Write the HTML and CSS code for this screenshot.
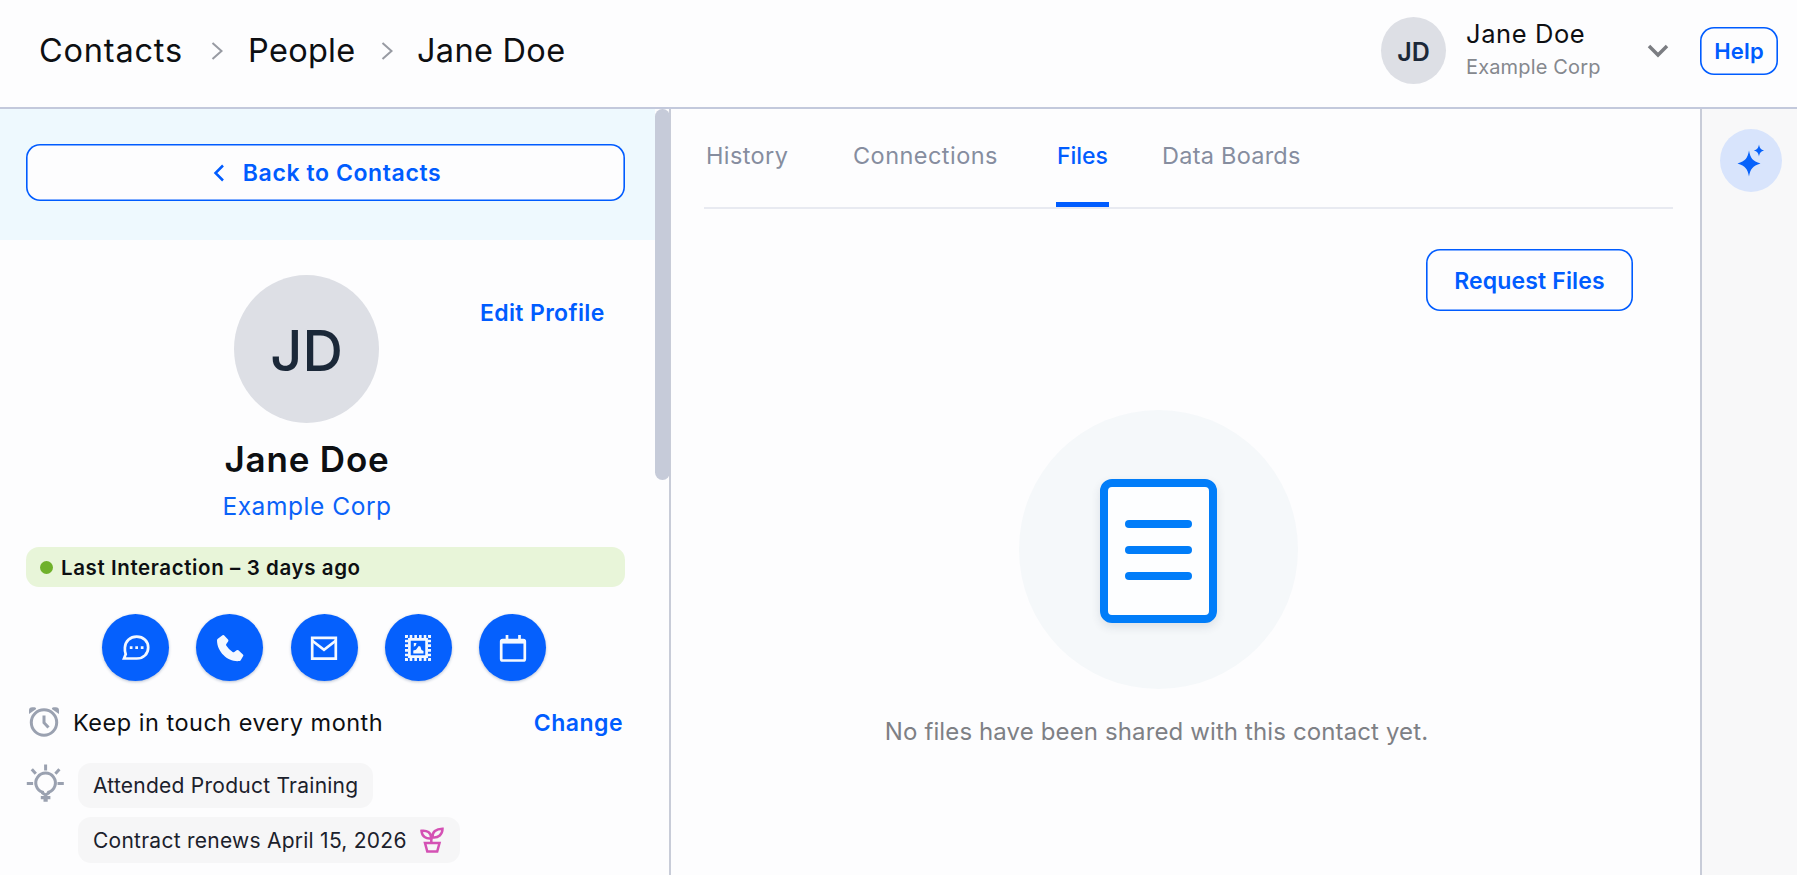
FILE: index.html
```html
<!DOCTYPE html>
<html lang="en">
<head>
<meta charset="utf-8">
<title>Jane Doe</title>
<link rel="stylesheet" href="styles.css">
</head>

<body>
    <header class="header">
        <nav class="crumbs">
            <span class="crumb contacts">Contacts</span>
            <svg class="sep" width="12" height="18" viewBox="0 0 12 18"><path d="M1.5 1l9 8-9 8"/></svg>
            <span class="crumb people">People</span>
            <svg class="sep" width="12" height="18" viewBox="0 0 12 18"><path d="M1.5 1l9 8-9 8"/></svg>
            <span class="crumb person">Jane Doe</span>
        </nav>
        <div class="account">
            <div class="avatar small">JD</div>
            <div class="who">
                <span class="who-name">Jane Doe</span>
                <span class="who-corp">Example Corp</span>
            </div>
            <svg class="down" width="22" height="14" viewBox="0 0 22 14"><path d="M2 2l9 9 9-9"/></svg>
            <button class="btn help">Help</button>
        </div>
    </header>

    <div class="main">
        <aside class="side">
            <div class="side-body">
                <div class="back-bar">
                    <button class="btn back">
                        <svg width="12" height="18" viewBox="0 0 12 18"><path d="M10 1.500L2.500 9l7.500 7.500"/></svg>
                        <span>Back to Contacts</span>
                    </button>
                </div>

                <div class="profile">
                    <div class="avatar big">JD</div>
                    <a class="edit">Edit Profile</a>
                </div>
                <div class="names">
                    <h1 class="name">Jane Doe</h1>
                    <a class="corp">Example Corp</a>
                </div>

                <div class="last"><i class="dot"></i><span>Last Interaction – 3 days ago</span></div>

                <div class="actions">
                    <button class="action">
                        <svg width="28" height="28" viewBox="0 0 28 28">
                            <path class="line" d="M2 24.500l1.700-4.300C2.900 18 2.700 16 2.900 13.600 3.300 7.200 8 2.600 14.700 2.600c6.800 0 11.500 4.600 11.500 10.800 0 6.400-4.700 11.100-11.500 11.100z"/>
                            <path class="fill" d="M7.800 12.200h2.700v2.700H7.800zM13.300 12.200H16v2.700h-2.700zM18.800 12.200h2.700v2.700h-2.700z"/>
                        </svg>
                    </button>
                    <button class="action">
                        <svg width="28" height="28" viewBox="0 0 28 28">
                            <path class="fill" d="M6.500 1.200Q7.300.7 8 1.300l4 4.300q.7.900.1 1.800L10.300 10q-.5.900.1 1.800 2.600 4 6.200 6.300.9.500 1.700-.1l2.300-1.800q.9-.6 1.800.1l4.500 4.100q.8.700.3 1.600l-2.500 4.200q-.6.900-1.600.9C12.500 28.200 1.200 18.500 1 6.500q0-1 .8-1.700z"/>
                        </svg>
                    </button>
                    <button class="action">
                        <svg width="28" height="28" viewBox="0 0 28 28">
                            <path class="line" d="M2.200 3.800h23.600v20.900H2.200z"/>
                            <path class="line" d="M2 6.500l12 9.300 12-9.300"/>
                        </svg>
                    </button>
                    <button class="action">
                        <svg width="28" height="28" viewBox="0 0 28 28">
                            <path class="teeth" d="M1 2.500h26M1 25.500h26M2.500 1v26M25.500 1v26"/>
                            <path class="line" d="M5.400 5.400h17.200v17.200H5.400z"/>
                            <path class="fill" d="M9.300 19.500v-3l2.700-.8 2.700-3.700 1.700.6 1.100 3.300 2 1.200v2.400zM9.800 9h2.700l-.7 2.500-2 1.300z"/>
                        </svg>
                    </button>
                    <button class="action">
                        <svg width="28" height="28" viewBox="0 0 28 28">
                            <rect class="line" x="2.200" y="6" width="23.600" height="20.500" rx="1.500"/>
                            <path class="fill" d="M2 5h24v4.600H2z"/>
                            <path class="line" d="M8 1v6M20.500 1v6"/>
                        </svg>
                    </button>
                </div>

                <div class="touch">
                    <svg class="gray" width="32" height="32" viewBox="0 0 32 32">
                        <circle cx="16" cy="16.500" r="12.700"/>
                        <path d="M16 9.500v7.200l4.500 4.800"/>
                        <path class="solid" d="M1 8V4.500Q1 1.200 4.300 1.200h2.200Q8 1.200 8.200 3zM31 8V4.500q0-3.300-3.300-3.300h-2.200Q24 1.200 23.800 3z"/>
                    </svg>
                    <span class="touch-text">Keep in touch every month</span>
                    <a class="change">Change</a>
                </div>

                <div class="notes">
                    <svg class="gray" width="38" height="41" viewBox="0 0 38 41">
                        <path d="M16.500 30v-.8a9.800 9.800 0 1 1 6.200 0V30l-3.100 2z"/>
                        <path d="M19.600 1.500v6M.8 20.500h6.300M31.500 20.500h6.300M5.800 6.200l4 4.500M33.400 6.200l-4 4.500"/>
                        <path class="solid" d="M14.800 33h9.600v3.300h-2.700v2.500h-4.200v-2.500h-2.700z"/>
                    </svg>
                    <div class="chips">
                        <div class="chip training">Attended Product Training</div>
                        <div class="chip renews">
                            <span>Contract renews April 15, 2026</span>
                            <svg class="plant" width="24" height="26" viewBox="0 0 24 26">
                                <path d="M5 16h14.500l-2.300 8.500H7.300z"/>
                                <path d="M11.300 16v-4.500"/>
                                <path d="M11.300 11.300C6 12 2 9.500 1.500 3.800 7 3 11 5.500 11.300 11.300zM12.500 10.300C12 5 16 1.800 22.500 1.800 22.500 7.500 18.500 11 12.500 10.300z"/>
                            </svg>
                        </div>
                    </div>
                </div>
            </div>
            <div class="scroll"><div class="thumb"></div></div>
        </aside>

        <section class="content">
            <nav class="tabs">
                <a class="tab history">History</a>
                <a class="tab connections">Connections</a>
                <a class="tab files active">Files</a>
                <a class="tab boards">Data Boards</a>
            </nav>
            <div class="tools">
                <button class="btn request">Request Files</button>
            </div>
            <div class="empty">
                <div class="empty-circle">
                    <div class="doc"><i></i><i></i><i></i></div>
                </div>
                <p class="empty-text">No files have been shared with this contact yet.</p>
            </div>
        </section>

        <aside class="rail">
            <button class="spark">
                <svg width="30" height="34" viewBox="0 0 30 34">
                    <path d="M13 6.500C14.300 14 16.500 17 24.500 19.500c-8 2.500-10.200 5.500-11.500 13-1.300-7.500-3.500-10.500-11.500-13C9.500 17 11.700 14 13 6.500z"/>
                    <path d="M23 .5c.7 3.600 1.700 5 5 6-3.300 1-4.300 2.400-5 6-.7-3.600-1.700-5-5-6 3.300-1 4.300-2.400 5-6z"/>
                </svg>
            </button>
        </aside>
    </div>
</body>
</html>
```

FILE: styles.css
```css
* {
    box-sizing: border-box;
}
body {
    margin: 0;
    height: 875px;
    overflow: hidden;
    display: flex;
    flex-direction: column;
    background: #fdfdfe;
    color: #0d0f12;
    font-family: Inter, "Liberation Sans", sans-serif;
    white-space: nowrap;
}
button {
    font-family: inherit;
    padding: 0;
    margin: 0;
}
svg {
    display: block;
    fill: none;
    flex: none;
}

/* header */
.header {
    height: 109px;
    flex: none;
    display: flex;
    justify-content: space-between;
    border-bottom: 2px solid #c3c9dc;
    padding: 0 19px 0 39px;
}
.crumbs {
    display: flex;
    align-items: center;
    height: 101px;
    font-size: 32.5px;
}
.sep {
    stroke: #989ba3;
    stroke-width: 2;
}
.contacts {
    width: 172px;
    letter-spacing: .8px;
}
.people {
    width: 133px;
    margin-left: 25px;
    letter-spacing: .3px;
}
.person {
    margin-left: 24px;
    letter-spacing: .3px;
}
.account {
    display: flex;
    align-items: center;
    height: 101px;
}
.avatar {
    display: flex;
    align-items: center;
    justify-content: center;
    border-radius: 50%;
    background: #dddfe5;
    color: #1b2838;
}
.avatar.small {
    width: 65px;
    height: 67px;
    padding-top: 2px;
    font-size: 25px;
    font-weight: 600;
}
.who {
    display: flex;
    flex-direction: column;
    width: 181px;
    margin-left: 20px;
}
.who-name {
    font-size: 25.5px;
    line-height: 32px;
    letter-spacing: .6px;
}
.who-corp {
    padding-top: 1px;
    font-size: 20px;
    line-height: 32px;
    letter-spacing: .15px;
    color: #85888e;
}
.down {
    stroke: #7b7d82;
    stroke-width: 3.5;
}
.btn {
    background: #fdfdfe;
    border: 0;
    box-shadow: inset 0 0 0 1.6px #005cff;
    border-radius: 14px;
    color: #005cff;
    font-weight: 600;
}
.help {
    width: 78px;
    height: 48px;
    margin-left: 31px;
    padding-top: 1px;
    font-size: 22px;
    letter-spacing: .2px;
}

/* left panel */
.main {
    flex: 1;
    min-height: 0;
    display: flex;
}
.side {
    width: 671px;
    flex: none;
    display: flex;
    border-right: 2px solid #c8ccd8;
}
.side-body {
    width: 655px;
    flex: none;
}
.back-bar {
    height: 131px;
    padding: 35px 30px 0 26px;
    background: #eef9fe;
}
.back {
    display: flex;
    align-items: center;
    justify-content: center;
    gap: 18px;
    width: 100%;
    height: 57px;
    padding: 1px 0 0 3px;
    font-size: 23px;
    letter-spacing: .6px;
}
.back svg {
    stroke: #005cff;
    stroke-width: 2.5;
}
.profile {
    display: flex;
    padding: 35px 0 0 234px;
}
.avatar.big {
    width: 145px;
    height: 148px;
    padding-top: 3px;
    font-size: 56px;
    font-weight: 500;
}
.edit {
    margin: 24px 0 0 101px;
    font-size: 23px;
    line-height: 28px;
    font-weight: 600;
    letter-spacing: .35px;
    color: #005cff;
}
.names {
    display: flex;
    flex-direction: column;
    align-items: center;
    width: 614px;
}
.name {
    margin: 15px 0 0;
    font-size: 35px;
    line-height: 42px;
    font-weight: 600;
    letter-spacing: .8px;
}
.corp {
    margin-top: 10px;
    font-size: 24.5px;
    line-height: 32px;
    letter-spacing: .55px;
    color: #0a62f8;
}
.last {
    display: flex;
    align-items: center;
    gap: 8px;
    height: 40px;
    margin: 25px 30px 0 26px;
    padding: 1px 0 0 14px;
    border-radius: 13px;
    background: #e8f5d9;
    font-size: 20.5px;
    font-weight: 600;
    letter-spacing: .6px;
}
.dot {
    width: 13px;
    height: 13px;
    border-radius: 50%;
    background: #6fb12b;
}
.actions {
    display: flex;
    gap: 27.300px;
    padding: 27px 0 0 102px;
}
.action {
    display: flex;
    align-items: center;
    justify-content: center;
    width: 67px;
    height: 67px;
    border: 0;
    border-radius: 50%;
    background: #0560fd;
    box-shadow: 0 1px 3px rgba(20, 50, 110, .3);
}
.action .line {
    stroke: #f4f8ff;
    stroke-width: 2.7;
}
.action .fill {
    fill: #f4f8ff;
}
.action .teeth {
    stroke: #f4f8ff;
    stroke-width: 3;
    stroke-dasharray: 2.600 2.080;
}
.touch {
    display: flex;
    align-items: center;
    height: 32px;
    margin: 25px 32px 0 28px;
    font-size: 23.5px;
}
.gray {
    stroke: #9aa1b0;
    stroke-width: 3;
}
.gray .solid {
    fill: #9aa1b0;
    stroke: none;
}
.touch-text {
    margin-left: 13px;
    padding-top: 1px;
    letter-spacing: .5px;
}
.change {
    margin-left: auto;
    padding-top: 2px;
    color: #005cff;
    font-size: 23px;
    font-weight: 600;
    letter-spacing: .5px;
}
.notes {
    display: flex;
    padding: 25px 0 0 26px;
}
.chips {
    display: flex;
    flex-direction: column;
    align-items: flex-start;
    gap: 9px;
    margin-left: 14px;
}
.chip {
    display: flex;
    align-items: center;
    height: 45px;
    padding-left: 15px;
    border-radius: 13px;
    background: #f6f6f7;
    color: #1b212c;
    font-size: 21px;
    letter-spacing: .25px;
}
.training {
    width: 295px;
}
.renews {
    width: 382px;
    height: 46px;
    justify-content: space-between;
    padding-right: 16px;
}
.plant {
    stroke: #d451b4;
    stroke-width: 2.500;
}
.thumb {
    width: 15px;
    height: 371px;
    border-radius: 8px;
    background: #c6cbd9;
}

/* files */
.content {
    flex: 1;
    min-width: 0;
}
.tabs {
    display: flex;
    height: 100px;
    margin: 0 27px 0 33px;
    border-bottom: 2px solid #e8eaf1;
    font-size: 23.5px;
    color: #868d9f;
}
.tab {
    height: 98px;
    padding-top: 33px;
    line-height: 28px;
}
.history {
    width: 147px;
    margin-left: 2px;
    letter-spacing: .4px;
}
.connections {
    width: 203px;
    letter-spacing: .45px;
}
.files {
    width: 53px;
    text-align: center;
}
.boards {
    margin-left: 53px;
    letter-spacing: .25px;
}
.tab.active {
    color: #005cff;
    font-size: 23px;
    font-weight: 500;
    border-bottom: 5px solid #005cff;
}
.tools {
    display: flex;
    justify-content: flex-end;
    padding: 40px 67px 0 0;
}
.request {
    width: 207px;
    height: 62px;
    padding-top: 1px;
    font-size: 23px;
    letter-spacing: .15px;
}
.empty {
    display: flex;
    flex-direction: column;
    align-items: center;
    width: 974px;
    padding-top: 99px;
}
.empty-circle {
    display: flex;
    align-items: center;
    justify-content: center;
    width: 279px;
    height: 279px;
    padding-top: 2px;
    border-radius: 50%;
    background: #f5f8fa;
}
.doc {
    display: flex;
    flex-direction: column;
    align-items: center;
    gap: 18px;
    width: 117px;
    height: 144px;
    padding-top: 33px;
    border: 8px solid #017df9;
    border-radius: 12px;
    background: #fdfeff;
    box-shadow: 0 4px 10px rgba(40, 60, 90, .12);
}
.doc i {
    width: 67px;
    height: 8px;
    border-radius: 4px;
    background: #017df9;
}
.empty-text {
    margin: 27px 3px 0 0;
    font-size: 24px;
    line-height: 32px;
    letter-spacing: .12px;
    color: #7e8085;
}

/* right rail */
.rail {
    width: 97px;
    flex: none;
    padding: 20px 0 0 18px;
    border-left: 2px solid #c8ccd8;
    background: #f8f8f9;
}
.spark {
    display: flex;
    align-items: center;
    justify-content: center;
    width: 62px;
    height: 63px;
    border: 0;
    border-radius: 50%;
    background: #d8e4fc;
}
.spark path {
    fill: #0762fb;
}
```
